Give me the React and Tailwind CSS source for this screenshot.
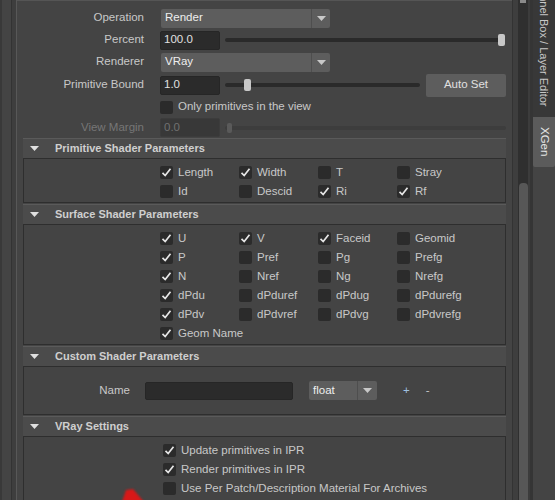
import React from 'react';

function Check({ checked, size = 13 }) {
  return (
    <div
      className="flex shrink-0 items-center justify-center rounded-[2px] bg-[#2b2b2b]"
      style={{ width: size, height: size }}
    >
      {checked && (
        <svg width="11" height="11" viewBox="0 0 11 11">
          <polyline points="1.5,5.8 4.2,8.5 9.5,1.8" fill="none" stroke="#e6e6e6" strokeWidth="1.7" />
        </svg>
      )}
    </div>
  );
}

function CheckItem({ label, checked }) {
  return (
    <div className="flex h-[19px] items-center gap-[5px]">
      <Check checked={checked} />
      <span className="whitespace-nowrap">{label}</span>
    </div>
  );
}

function Dropdown({ value, width, arrowWidth = 18 }) {
  return (
    <div
      className="flex h-[19px] items-center rounded-[2px] bg-[#5d5d5d] text-[#eeeeee]"
      style={{ width }}
    >
      <span className="flex-1 pl-[4px]">{value}</span>
      <div className="h-full w-px bg-[#4e4e4e]" />
      <div className="flex h-full items-center justify-center" style={{ width: arrowWidth }}>
        <svg width="9" height="5" viewBox="0 0 9 5">
          <polygon points="0,0 9,0 4.5,5" fill="#c8c8c8" />
        </svg>
      </div>
    </div>
  );
}

function Field({ value, dim }) {
  return (
    <div
      className={
        'flex h-[19px] w-[60px] items-center rounded-[2px] border pl-[3px] ' +
        (dim ? 'border-[#3c3c3c] bg-[#383838] text-[#707070]' : 'border-[#262626] bg-[#2b2b2b] text-[#e0e0e0]')
      }
    >
      {value}
    </div>
  );
}

function Slider({ width, thumb, dim }) {
  return (
    <div className="relative ml-[5px] h-[14px]" style={{ width }}>
      <div
        className={'absolute left-0 top-[5px] h-[4px] rounded-full ' + (dim ? 'bg-[#3d3d3d]' : 'bg-[#2a2a2a]')}
        style={{ width: dim ? width : width - 3 }}
      />
      <div
        className={
          'absolute rounded-[2px] ' +
          (dim ? 'top-[2px] h-[10px] w-[5px] bg-[#5a5a5a]' : 'top-[1px] h-[12px] w-[7px] bg-[#c8c8c8]')
        }
        style={{ left: thumb }}
      />
    </div>
  );
}

function Row({ label, dim, h = 22, children }) {
  return (
    <div className="flex items-center" style={{ height: h }}>
      <div className={'w-[128px] pr-px text-right ' + (dim ? 'text-[#767676]' : '')}>{label}</div>
      <div className="ml-[15px] flex items-center">{children}</div>
    </div>
  );
}

function Section({ title, children }) {
  return (
    <div className="mb-px ml-[6px] w-[483px]">
      <div className="flex h-[20px] items-center border-t border-[#5a5a5a] bg-[#4b4b4b]">
        <svg className="ml-[7px]" width="9" height="5" viewBox="0 0 9 5">
          <polygon points="0,0 9,0 4.5,5" fill="#e0e0e0" />
        </svg>
        <span className="ml-[16px] text-[11px] font-bold text-[#cfcfcf]">{title}</span>
      </div>
      <div className="border border-[#2e2e2e] bg-[#444444]">{children}</div>
    </div>
  );
}

const primitive = [
  ['Length', true], ['Width', true], ['T', false], ['Stray', false],
  ['Id', false], ['Descid', false], ['Ri', true], ['Rf', true],
];

const surface = [
  ['U', true], ['V', true], ['Faceid', true], ['Geomid', false],
  ['P', true], ['Pref', false], ['Pg', false], ['Prefg', false],
  ['N', true], ['Nref', false], ['Ng', false], ['Nrefg', false],
  ['dPdu', true], ['dPduref', false], ['dPdug', false], ['dPdurefg', false],
  ['dPdv', true], ['dPdvref', false], ['dPdvg', false], ['dPdvrefg', false],
  ['Geom Name', true],
];

export default function App() {
  return (
    <div className="relative flex h-[500px] w-[555px] overflow-hidden bg-[#444444] font-['Liberation_Sans',sans-serif] text-[11.5px] text-[#c8c8c8]">
      {/* left edge strips */}
      <div className="flex h-full shrink-0">
        <div className="w-[2px] bg-[#393939]" />
        <div className="w-[9px] bg-[#444444]" />
        <div className="w-px bg-[#333333]" />
        <div className="w-[4px] bg-[#3e3e3e]" />
        <div className="w-px bg-[#585858]" />
      </div>

      {/* attribute panel */}
      <div className="flex w-[495px] shrink-0 flex-col border-t border-[#555555]">
        <div className="pt-[6px]">
          <Row label="Operation">
            <div className="ml-px">
              <Dropdown value="Render" width={169} />
            </div>
          </Row>
          <Row label="Percent">
            <Field value="100.0" />
            <Slider width={280} thumb={273} />
          </Row>
          <Row label="Renderer">
            <div className="ml-px">
              <Dropdown value="VRay" width={169} />
            </div>
          </Row>
          <Row label="Primitive Bound" h={24}>
            <Field value="1.0" />
            <Slider width={198} thumb={19} />
            <div className="ml-[3px] flex h-[23px] w-[80px] items-center justify-center rounded-[2px] bg-[#5d5d5d] text-[#e0e0e0]">
              Auto Set
            </div>
          </Row>
          <Row label="" h={20}>
            <CheckItem label="Only primitives in the view" checked={false} />
          </Row>
          <Row label="View Margin" dim h={21}>
            <Field value="0.0" dim />
            <Slider width={281} thumb={2} dim />
          </Row>
        </div>

        <Section title="Primitive Shader Parameters">
          <div className="grid grid-cols-[79px_79px_79px_79px] pb-px pl-[136px] pt-[4px]">
            {primitive.map(([l, c]) => (
              <CheckItem key={l} label={l} checked={c} />
            ))}
          </div>
        </Section>

        <Section title="Surface Shader Parameters">
          <div className="grid grid-cols-[79px_79px_79px_79px] pb-px pl-[136px] pt-[4px]">
            {surface.map(([l, c]) => (
              <CheckItem key={l} label={l} checked={c} />
            ))}
          </div>
        </Section>

        <Section title="Custom Shader Parameters">
          <div className="flex h-[47px] items-center">
            <span className="w-[106px] text-right">Name</span>
            <div className="ml-[15px] h-[18px] w-[148px] rounded-[2px] border border-[#262626] bg-[#2b2b2b]" />
            <div className="ml-[16px]">
              <Dropdown value="float" width={68} arrowWidth={19} />
            </div>
            <span className="ml-[26px] text-[#9fc0e0]">+</span>
            <span className="ml-[16px]">-</span>
          </div>
        </Section>

        <Section title="VRay Settings">
          <div className="flex flex-col pb-[10px] pl-[139px] pt-[4px]">
            <CheckItem label="Update primitives in IPR" checked />
            <CheckItem label="Render primitives in IPR" checked />
            <CheckItem label="Use Per Patch/Description Material For Archives" checked={false} />
          </div>
        </Section>
      </div>

      {/* scroll gutter */}
      <div className="w-px shrink-0 bg-[#333333]" />
      <div className="w-[5px] shrink-0 bg-[#3e3e3e]" />
      <div className="flex w-[10px] shrink-0 flex-col bg-[#2f2f2f]">
        <div className="mx-auto h-[3px] w-[6px] bg-[#8a8a8a]" />
        <div className="h-[180px]" />
        <div className="mx-auto w-[9px] flex-1 rounded-t-[4px] bg-[#575757]" />
      </div>
      <div className="w-[2px] shrink-0 bg-[#3c3c3c]" />
      <div className="w-[3px] shrink-0 bg-[#353535]" />

      {/* side tabs */}
      <div className="flex w-[22px] shrink-0 flex-col bg-[#444444]">
        <div className="flex h-[117px] flex-col items-center justify-end overflow-hidden bg-[#383838] pb-[11px]">
          <span className="whitespace-nowrap text-[11px] text-[#c8c8c8] [writing-mode:vertical-rl]">Channel Box / Layer Editor</span>
        </div>
        <div className="flex h-[50px] items-center justify-center rounded-b-[2px] bg-[#5b5b5b]">
          <span className="whitespace-nowrap text-[#e4e4e4] [writing-mode:vertical-rl]">XGen</span>
        </div>
      </div>

      {/* red annotation arrow tip */}
      <svg className="absolute left-[119px] top-[486px] blur-[1px]" width="28" height="16" viewBox="0 0 28 16">
        <polygon points="3,16 7,4 14,3 25,16" fill="#d81818" />
      </svg>
    </div>
  );
}
